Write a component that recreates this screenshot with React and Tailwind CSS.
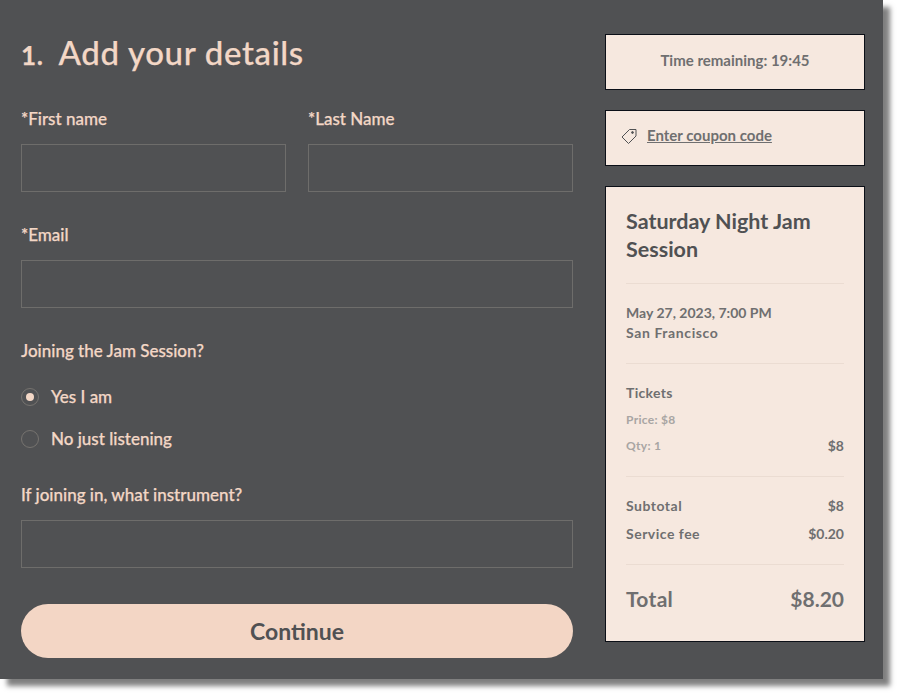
import React from "react";

function Field({ label, className = "" }) {
    return (
        <div className={className}>
            <label className="block h-[24px] text-[17px] leading-[24px] font-medium [-webkit-text-stroke:0.25px] text-[#f3d7c6]">{label}</label>
            <input className="block mt-[13px] w-full h-[48px] border border-[#6e6d6b] bg-transparent" />
        </div>
    );
}

function Radio({ label, checked }) {
    return (
        <div className="flex items-center h-[24px] gap-[12px]">
            <span className="flex items-center justify-center w-[18px] h-[18px] rounded-full border border-[#76736f]">
                {checked && <span className="w-[8px] h-[8px] rounded-full bg-[#f3d7c6]" />}
            </span>
            <span className="text-[17px] font-medium [-webkit-text-stroke:0.25px] text-[#f3d7c6]">{label}</span>
        </div>
    );
}

function Row({ left, right, className = "" }) {
    return (
        <div className={`flex justify-between items-center ${className}`}>
            <span className="tracking-[0.3px]">{left}</span>
            <span>{right}</span>
        </div>
    );
}

export default function App() {
    return (
        <div className="w-[898px] h-[694px] bg-white font-['Lato',sans-serif]">
            <div className="flex w-[883px] h-[679px] pl-[21px] bg-[#505153] shadow-[7px_7px_5px_rgba(0,0,0,0.5)]">
                <div className="w-[552px]">
                    <h1 className="mt-[32px] h-[40px] text-[33px] tracking-[0.65px] leading-[40px] font-medium [-webkit-text-stroke:0.25px] text-[#f3d7c6]">
                        <span className="font-bold text-[26px] mr-[15px]">1.</span>Add your details
                    </h1>
                    <div className="mt-[35px] flex gap-[22px]">
                        <Field label="*First name" className="w-[265px]" />
                        <Field label="*Last Name" className="w-[265px]" />
                    </div>
                    <Field label="*Email" className="mt-[31px]" />
                    <p className="mt-[31px] h-[24px] text-[17px] leading-[24px] font-medium [-webkit-text-stroke:0.25px] text-[#f3d7c6]">Joining the Jam Session?</p>
                    <div className="mt-[22px] flex flex-col gap-[18px]">
                        <Radio label="Yes I am" checked />
                        <Radio label="No just listening" />
                    </div>
                    <Field label="If joining in, what instrument?" className="mt-[32px]" />
                    <button className="mt-[36px] w-full h-[54px] rounded-full bg-[#f3d6c5] text-[23px] font-bold text-[#505153]">Continue</button>
                </div>

                <div className="ml-[32px] w-[260px] pt-[34px] flex flex-col gap-[20px] text-[#6f6f70]">
                    <div className="h-[56px] pb-[3px] flex items-center justify-center border border-[#0b0f17] bg-[#f6e8df] text-[15px] font-bold">
                        Time remaining: 19:45
                    </div>
                    <div className="h-[56px] pb-[6px] flex items-center pl-[15px] gap-[10px] border border-[#0b0f17] bg-[#f6e8df] text-[15px] font-bold">
                        <svg width="16" height="16" viewBox="0 0 16 16" fill="none" stroke="#505153" strokeWidth="1" className="mt-[2px]">
                            <path d="M1 9 L8.5 1.5 L15 1.5 L15 8 L7.5 15.5 Z" />
                            <circle cx="11.5" cy="4.5" r="0.9" fill="#505153" />
                        </svg>
                        <span className="underline">Enter coupon code</span>
                    </div>
                    <div className="h-[456px] px-[20px] border border-[#0b0f17] bg-[#f6e8df] text-[14px] font-bold">
                        <h2 className="mt-[20px] text-[21.5px] leading-[28px] font-bold text-[#505153]">Saturday Night Jam Session</h2>
                        <div className="mt-[20px] pb-[20px] pt-[19px] border-y border-[#ebdcd2] leading-[20px]">
                            <p>May 27, 2023, 7:00 PM</p>
                            <p className="tracking-[0.6px]">San Francisco</p>
                        </div>
                        <div className="pt-[19px] pb-[21px] border-b border-[#ebdcd2]">
                            <p className="leading-[20px] tracking-[0.3px]">Tickets</p>
                            <p className="mt-[8px] leading-[18px] text-[12px] tracking-[0.3px] text-[#a8a5a3]">Price: $8</p>
                            <Row left={<span className="text-[12px] text-[#a8a5a3]">Qty: 1</span>} right="$8" className="mt-[7px] leading-[18px]" />
                        </div>
                        <div className="pt-[19px] pb-[20px] border-b border-[#ebdcd2]">
                            <Row left={<span className="tracking-[0.5px]">Subtotal</span>} right="$8" className="leading-[20px]" />
                            <Row left={<span className="tracking-[0.5px]">Service fee</span>} right="$0.20" className="mt-[8px] leading-[20px]" />
                        </div>
                        <Row left="Total" right="$8.20" className="mt-[20px] text-[21px] leading-[28px]" />
                    </div>
                </div>
            </div>
        </div>
    );
}
